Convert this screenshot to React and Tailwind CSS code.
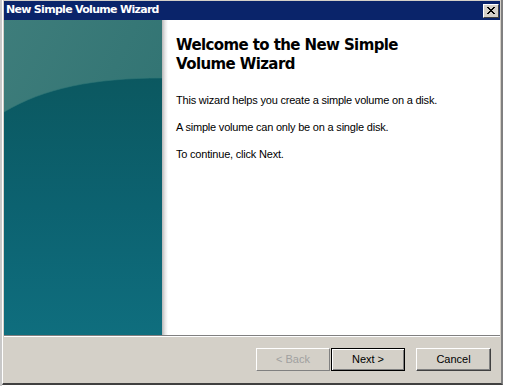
export default function App() {
  const ui = { fontFamily: '"Liberation Sans", Arial, sans-serif' };
  const bold = { fontFamily: '"DejaVu Sans", Verdana, sans-serif' };

  return (
    <div className="w-[506px] h-[386px] bg-white overflow-hidden flex" style={ui}>
      {/* desktop strip at left */}
      <div className="w-[2px] bg-[#c8c8c8]" />
      {/* window */}
      <div className="w-[501px] h-[385px] flex flex-col bg-[#d4d0c8] border-l border-[#ffffff] border-r-2 border-r-[#808080] border-b-2 border-b-[#404040]">
        <div className="h-[1px] bg-[#d4d0c8]" />
        {/* title bar */}
        <div className="h-[19px] mx-[1px] bg-[#0a246a] flex items-center justify-between pl-[2px] pr-[1px]">
          <span className="text-white text-[11px] font-bold tracking-[-0.7px]" style={bold}>
            New Simple Volume Wizard
          </span>
          <button className="w-[16px] h-[14px] bg-[#d4d0c8] border border-t-white border-l-white border-r-[#404040] border-b-[#404040] flex items-center justify-center">
            <svg width="8" height="7" viewBox="0 0 8 7">
              <path d="M0 0 L7 7 M1 0 L8 7 M7 0 L0 7 M8 0 L1 7" stroke="#000" strokeWidth="1" />
            </svg>
          </button>
        </div>
        {/* body */}
        <div className="h-[315px] mx-[1px] flex bg-white">
          <div className="w-[158px] h-full relative overflow-hidden bg-[#2a6e6e]">
            <svg className="absolute inset-0" width="158" height="315" viewBox="0 0 158 315">
              <defs>
                <linearGradient id="lower" x1="0" y1="0" x2="0" y2="1">
                  <stop offset="0" stopColor="#0b5860" />
                  <stop offset="0.5" stopColor="#0c6270" />
                  <stop offset="1" stopColor="#0f6e7e" />
                </linearGradient>
                <linearGradient id="upper" x1="0" y1="0" x2="1" y2="1">
                  <stop offset="0" stopColor="#3e7d7b" />
                  <stop offset="1" stopColor="#2b6f6f" />
                </linearGradient>
              </defs>
              <rect width="158" height="315" fill="url(#upper)" />
              <path d="M0 92 C 40 68, 90 58, 158 58 L158 315 L0 315 Z" fill="url(#lower)" />
              <path d="M0 92 C 40 68, 90 58, 158 58" fill="none" stroke="#2f7776" strokeWidth="1" opacity="0.6" />
            </svg>
          </div>
          <div className="w-[6px] h-full bg-gradient-to-r from-[#b8b8b8] via-[#e6e6e6] to-white" />
          <div className="flex-1 pl-[8px] pt-[16px]">
            <h1 className="text-[15px] font-bold leading-[19px] text-black tracking-[-0.6px]" style={bold}>
              Welcome to the New Simple
              <br />
              Volume Wizard
            </h1>
            <div className="mt-[20px] text-[11px] leading-[13px] text-black tracking-[-0.2px] flex flex-col gap-[14px]">
              <p>This wizard helps you create a simple volume on a disk.</p>
              <p>A simple volume can only be on a single disk.</p>
              <p>To continue, click Next.</p>
            </div>
          </div>
        </div>
        {/* separator */}
        <div className="mx-[1px] h-[1px] bg-[#808080]" />
        <div className="mx-[1px] h-[1px] bg-white" />
        {/* buttons */}
        <div className="flex-1 flex items-start justify-end pt-[11px] pr-[10px] text-[11px]">
          <button className="w-[74px] h-[23px] bg-[#d4d0c8] border border-t-white border-l-white border-r-[#808080] border-b-[#808080] text-[#a0a0a0]">
            &lt; Back
          </button>
          <button className="ml-[1px] w-[74px] h-[23px] bg-[#d4d0c8] border border-black shadow-[inset_1px_1px_0_#fff,inset_-1px_-1px_0_#808080] text-black">
            Next &gt;
          </button>
          <button className="ml-[11px] w-[75px] h-[23px] bg-[#d4d0c8] border border-t-white border-l-white border-r-[#404040] border-b-[#404040] shadow-[inset_-1px_-1px_0_#808080] text-black">
            Cancel
          </button>
        </div>
      </div>
      <div className="w-[3px] bg-white" />
    </div>
  );
}
